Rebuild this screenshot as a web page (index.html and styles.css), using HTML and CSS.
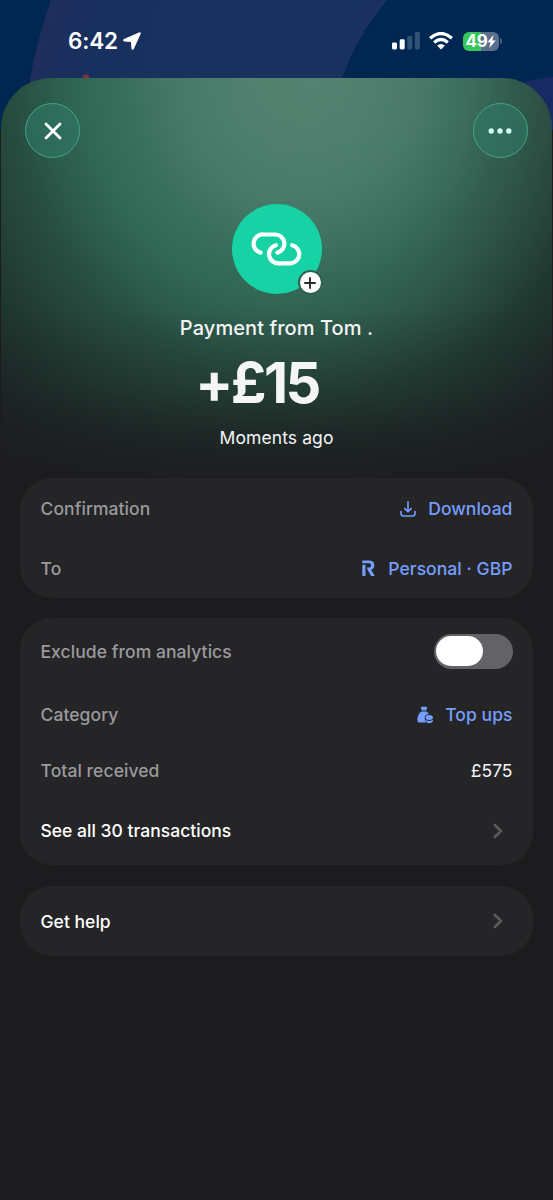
FILE: index.html
```html
<!DOCTYPE html>
<html lang="en">
<head>
<meta charset="utf-8">
<title>Payment details</title>
<link rel="stylesheet" href="styles.css">
</head>
<body>
<div class="screen">
  <svg class="backdrop" width="553" height="130" viewBox="0 0 553 130" aria-hidden="true">
    <defs>
      <linearGradient id="band" x1="0" y1="0.4" x2="1" y2="0.5">
        <stop offset="0" stop-color="#1f2d5c"/>
        <stop offset="0.18" stop-color="#18305f"/>
        <stop offset="0.8" stop-color="#183262"/>
        <stop offset="1" stop-color="#1d2f60"/>
      </linearGradient>
    </defs>
    <rect width="553" height="130" fill="#002752"/>
    <path d="M51 0Q37 40 30 79V130H320L342 79Q356 37 387 0Z" fill="url(#band)"/>
    <path d="M520 84Q535 78 553 77V130H520Z" fill="#192a62"/>
    <circle cx="86" cy="78" r="3.5" fill="#85303f"/>
  </svg>

  <header class="status">
    <div class="status-left">
      <span class="time">6:42</span>
      <svg width="18" height="18" viewBox="0 0 18 18"><path d="M16 .4 1 7C-.3 7.700 0 9.400 1.400 9.500L8 9.900 8.400 16.600C8.500 18 10.200 18.200 10.800 17L17.600 2C18 .8 17.200-.1 16 .4Z" fill="#fff"/></svg>
    </div>
    <div class="status-right">
      <svg width="29" height="18" viewBox="0 0 29 18">
        <rect x="0" y="10.500" width="5" height="7" rx="1.400" fill="#fff"/>
        <rect x="7.700" y="7.300" width="5" height="10.200" rx="1.400" fill="#fff"/>
        <rect x="15.300" y="4" width="5" height="13.500" rx="1.400" fill="#335375"/>
        <rect x="22.900" y="0" width="5" height="17.500" rx="1.400" fill="#335375"/>
      </svg>
      <svg class="wifi" width="24" height="18" viewBox="0 0 24 18">
        <g fill="none" stroke="#fff" stroke-width="3.300">
          <path d="M1.100 6.200Q12-3.200 22.900 6.200"/>
          <path d="M5.200 10.500Q12 4.600 18.800 10.500"/>
        </g>
        <path d="M8.100 13.600Q12 10.200 15.900 13.600L12.600 17Q12 17.600 11.400 17Z" fill="#fff"/>
      </svg>
      <div class="battery">
        <span class="level">49</span>
        <svg width="9" height="13" viewBox="0 0 9 13"><path d="M6.600 0 .3 7.300h3.200L2.200 13 8.800 5.400H5.300Z" fill="#fff"/></svg>
      </div>
      <i class="battery-cap"></i>
    </div>
  </header>

  <main class="sheet">
    <nav class="actions">
      <button class="round" aria-label="Close">
        <svg width="18" height="18" viewBox="0 0 18 18"><path d="M2 2 16 16M16 2 2 16" stroke="#fff" stroke-width="2.800" stroke-linecap="round"/></svg>
      </button>
      <button class="round" aria-label="More">
        <svg class="dots" width="24" height="6" viewBox="0 0 24 6" fill="#d1fff0"><circle cx="3.200" cy="3" r="2.700"/><circle cx="12" cy="3" r="2.700"/><circle cx="20.800" cy="3" r="2.700"/></svg>
      </button>
    </nav>

    <section class="summary">
      <div class="avatar">
        <svg width="54" height="36" viewBox="0 0 54 36">
          <g fill="none" stroke="#fff" stroke-width="4.200" stroke-linecap="round" transform="translate(1.400 0)">
            <path d="M9.200 21.600A9.200 9.200 0 0 1 12.200 3.500H24.500A9.200 9.200 0 0 1 26 21.600"/>
            <path d="M24.500 14.200A9.200 9.200 0 0 0 27 32.300H39.500A9.200 9.200 0 0 0 40.800 14.200"/>
          </g>
        </svg>
        <span class="badge"><svg width="12" height="12" viewBox="0 0 12 12"><path d="M6 .3V11.700M.3 6H11.700" stroke="#262a2b" stroke-width="1.900"/></svg></span>
      </div>
      <h1 class="title">Payment from Tom .</h1>
      <p class="amount">+£15</p>
      <p class="when">Moments ago</p>
    </section>

    <div class="cards">
      <section class="card receipt">
        <div class="row"><span class="label">Confirmation</span>
          <a class="link download">
            <svg width="16" height="16" viewBox="0 0 16 16" fill="none" stroke="#759eff" stroke-width="1.600" stroke-linecap="round" stroke-linejoin="round"><path d="M8 .8V10.500M4.800 7.600 8 10.700 11.200 7.600M1 10.500V12.500Q1 15 3.500 15H12.500Q15 15 15 12.500V10.500"/></svg>
            <span class="download-text">Download</span></a>
        </div>
        <div class="row"><span class="label">To</span>
          <a class="link account">
            <svg width="13" height="17" viewBox="0 0 13 17" fill="#759eff"><path d="M.3 4.800H3.500V16H.3Z"/><path d="M.3.5H7.500Q12.300.8 12.300 5.200 12.300 8.700 9.200 9.700L12.700 16H9.100L5.200 9V7.600H7.300Q9.100 7.400 9.100 5.200 9.100 3.400 7.200 3.200H.3Z"/></svg>
            <span class="account-text">Personal · GBP</span></a>
        </div>
      </section>

      <section class="card analytics">
        <div class="row toggle-row"><span class="label exclude">Exclude from analytics</span><span class="toggle"><i></i></span></div>
        <div class="row category-row"><span class="label category">Category</span>
          <a class="link topups">
            <svg width="17" height="18" viewBox="0 0 17 18" fill="#759eff">
              <path d="M3.800 1.400Q5.400-.2 7 .8 8.600-.2 10.200 1.400L9.500 4Q7 5 4.500 4Z"/>
              <path d="M4.300 5.500H9.700L12.200 8Q7.900 8.300 7.600 12.100L8.900 16.500H2.200Q.2 16.300.3 13.500.6 8.400 4.300 5.500Z"/>
              <ellipse cx="12.200" cy="11.500" rx="3.700" ry="2.500"/>
              <path d="M8.900 14.100Q12.200 16 15.900 13.800V15Q14.900 17.200 12.300 17.200 9.700 17.100 8.900 15.200Z"/>
            </svg>
            <span class="topups-text">Top ups</span></a>
        </div>
        <div class="row total-row"><span class="label total">Total received</span><span class="value">£575</span></div>
        <div class="row all-row"><span class="strong all">See all 30 transactions</span>
          <svg class="chevron" width="10" height="16" viewBox="0 0 10 16"><path d="M1.800 2 8 8 1.800 14" fill="none" stroke="#5a5a5d" stroke-width="2.700" stroke-linecap="round" stroke-linejoin="round"/></svg>
        </div>
      </section>

      <section class="card help">
        <div class="row"><span class="strong help-text">Get help</span>
          <svg class="chevron" width="10" height="16" viewBox="0 0 10 16"><path d="M1.800 2 8 8 1.800 14" fill="none" stroke="#5a5a5d" stroke-width="2.700" stroke-linecap="round" stroke-linejoin="round"/></svg>
        </div>
      </section>
    </div>
  </main>
</div>
</body>
</html>
```
FILE: styles.css
```css
* { box-sizing: border-box; }
body {
  margin: 0;
  background: #1c1c1e;
  font-family: Inter, "Liberation Sans", sans-serif;
  color: #f4f5f6;
}
p, h1 { margin: 0; font-weight: 400; }
svg { display: block; flex: none; }
.screen { position: relative; width: 553px; height: 1200px; overflow: hidden; isolation: isolate; }
.backdrop { position: absolute; inset: 0 0 auto; z-index: -1; }

.status {
  height: 78px;
  padding: 4px 51px 0 68px;
  display: flex;
  align-items: center;
  justify-content: space-between;
}
.status-left { display: flex; align-items: center; gap: 5px; }
.time { font-size: 22.5px; font-weight: 580; line-height: 28px; color: #fff; letter-spacing: -0.2px; }
.status-right { display: flex; align-items: center; }
.wifi { margin-left: 8px; }
.battery {
  width: 36px; height: 19px; margin-left: 10px;
  border-radius: 6px;
  background: linear-gradient(90deg, #34c759 49%, #59708c 49%);
  display: flex; align-items: center; justify-content: center;
}
.level { font-size: 17px; font-weight: 700; line-height: 19px; letter-spacing: -0.3px; color: #fff; }
.battery-cap { width: 2px; height: 6px; margin-left: 1px; border-radius: 0 2px 2px 0; background: #45607f; }

.sheet {
  height: 1122px;
  margin: 0 1px;
  padding: 25px 19px 0;
  border-radius: 50px 50px 0 0;
  background:
    linear-gradient(180deg, rgba(28,28,30,0) 230px, rgba(28,28,30,.25) 310px, rgba(28,28,30,1) 410px),
    radial-gradient(ellipse 300px 310px at 315px 0, rgba(104,141,127,.6), rgba(98,136,122,.5) 35%, rgba(80,120,106,.26) 65%, rgba(60,100,86,0)),
    radial-gradient(ellipse 420px 480px at 268px 0, #3a755f 0, #34705b 25%, #2b6350 45%, #26483d 65%, #1f352f 80%, #1d2424 95%, #1c1c1e 110%);
}
.actions { display: flex; justify-content: space-between; padding: 0 5px; }
.round {
  width: 55px; height: 55px; padding: 0;
  border: 1px solid #3fa785;
  border-radius: 50%;
  background: rgba(48,120,100,.62);
  display: flex; align-items: center; justify-content: center;
}
.dots { margin-right: 1px; }
.summary { display: flex; flex-direction: column; align-items: center; padding-top: 46px; }
.avatar {
  position: relative;
  width: 90px; height: 90px;
  border-radius: 50%;
  background: #16d2a5;
  display: flex; align-items: center; justify-content: center;
}
.badge {
  position: absolute; right: -1px; bottom: -1px;
  width: 25px; height: 25px;
  border: 2px solid #305e50; border-radius: 50%;
  background: #fff;
  display: flex; align-items: center; justify-content: center;
}
.title { margin-top: 20px; font-size: 20px; font-weight: 500; line-height: 28px; letter-spacing: .08px; }
.amount { margin: 12px 39px 0 0; font-size: 56px; line-height: 58px; font-weight: 700; letter-spacing: -2.600px; }
.when { margin-top: 13px; font-size: 17.500px; line-height: 26px; letter-spacing: .1px; }

.cards { display: flex; flex-direction: column; gap: 20px; margin-top: 27px; }
.card {
  padding: 0 20.500px;
  border-radius: 32px;
  background: #252527;
  font-size: 17.500px;
  line-height: 24px;
}
.row { display: flex; align-items: center; justify-content: space-between; }
.receipt { height: 120px; }
.receipt .row { height: 60px; padding-top: 1px; }
.label { color: #9a9a9d; font-weight: 480; letter-spacing: .07px; }
.link { display: flex; align-items: center; color: #759eff; font-weight: 500; letter-spacing: .05px; }
.download { gap: 12px; }
.account { gap: 13px; }
.topups { gap: 11px; }
.value { color: #f4f5f6; }
.strong { color: #fff; font-weight: 500; letter-spacing: .02px; }
.analytics { height: 247px; }
.toggle-row { height: 66px; }
.toggle-row .label { padding-top: 1px; }
.category-row { height: 61px; }
.total-row { height: 51px; }
.all-row { height: 69px; }
.help { margin-top: 1px; height: 70px; }
.help .row { height: 70px; }
.help-text { padding-top: 1px; }
.chevron { margin-right: 9.500px; }
.toggle { width: 79px; height: 35px; padding: 2.500px; border-radius: 18px; background: #626267; display: flex; }
.toggle i { width: 47px; height: 30px; border-radius: 15px; background: #fff; }
```
